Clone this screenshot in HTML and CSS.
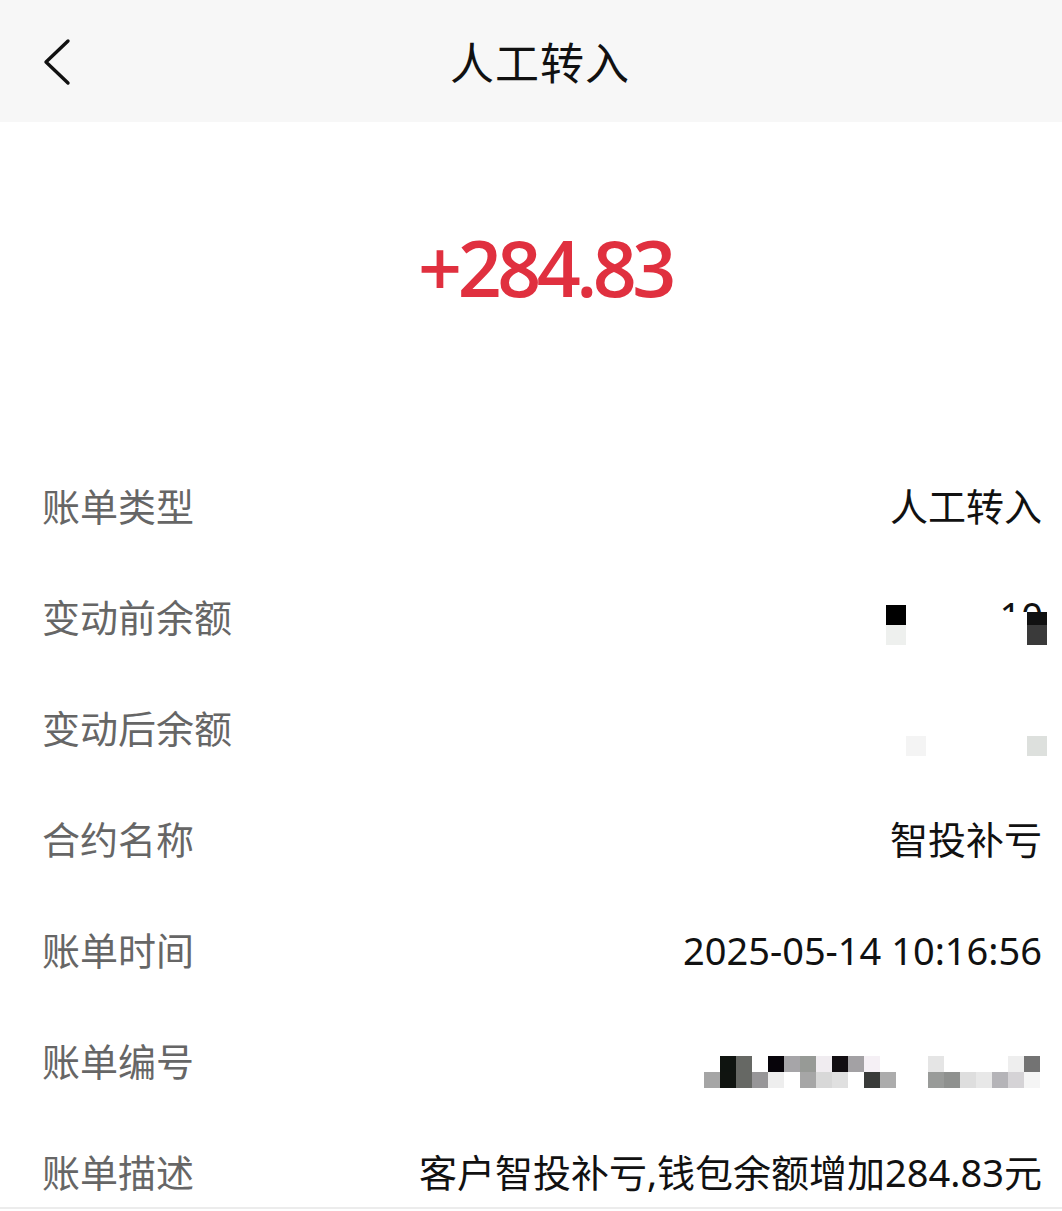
FILE: index.html
```html
<!DOCTYPE html>
<html>

<head>
    <meta charset="utf-8">
    <title>人工转入</title>
    <link rel="stylesheet" href="styles.css">
</head>

<body>
    <div class="page">
        <header class="nav-bar">
            <a class="back" href="#">
                <svg width="32" height="48" viewBox="0 0 32 48">
                    <polyline points="28,3 6,24 28,45" fill="none" stroke="#111" stroke-width="3.4" stroke-linecap="round" stroke-linejoin="round" />
                </svg>
            </a>
            <h1 class="nav-title">人工转入</h1>
        </header>

        <section class="amount-box">
            <div class="amount">+284.83</div>
        </section>

        <ul class="detail-list">
            <li class="detail-row">
                <span class="label">账单类型</span>
                <span class="value">人工转入</span>
            </li>
            <li class="detail-row">
                <span class="label">变动前余额</span>
                <div class="mosaic mosaic-big" id="before">
                    <div class="peek"><span>10</span></div>
                </div>
            </li>
            <li class="detail-row">
                <span class="label">变动后余额</span>
                <div class="mosaic mosaic-big" id="after"></div>
            </li>
            <li class="detail-row">
                <span class="label">合约名称</span>
                <span class="value">智投补亏</span>
            </li>
            <li class="detail-row">
                <span class="label">账单时间</span>
                <span class="value">2025-05-14 10:16:56</span>
            </li>
            <li class="detail-row">
                <span class="label">账单编号</span>
                <div class="mosaic mosaic-small" id="billno"></div>
            </li>
            <li class="detail-row">
                <span class="label">账单描述</span>
                <span class="value">客户智投补亏,钱包余额增加284.83元</span>
            </li>
        </ul>
    </div>

    <script>
        // pixelated (redacted) values, one colour per cell, "" = empty
        const mosaics = {
            before: [
                ["#000", "", "", "", "", "", "", "linear-gradient(transparent 0 35%, #111 35%)"],
                ["#eef0ee", "", "", "", "", "", "", "#3a3a3a"]
            ],
            after: [
                ["", "", "", "", "", "", "", ""],
                ["", "#f4f4f4", "", "", "", "", "", "#dde0dd"]
            ],
            billno: [
                ["", "#0f1410", "#666864", "", "#07040a", "#a6a5a8", "#979a96", "#f0ecf0", "#120e12", "#a3a1a4", "#f5f0f5",
                    "", "", "", "#e5e5e5", "", "", "", "", "#eeeeee", "#737373"],
                ["#a5a5a5", "#101410", "#666864", "#979698", "#eeeeee", "", "#a6a6a6", "#d8d8d8", "#e0e0e0", "", "#393b39",
                    "#acacac", "", "", "#999b99", "#8f918f", "#dedede", "#e8e8e8", "#b5b4b8", "#d5d3d6", "#f5f5f5"]
            ]
        }

        Object.keys(mosaics).forEach(id => {
            const box = document.getElementById(id)
            mosaics[id].forEach(row => {
                row.forEach(color => {
                    const cell = document.createElement('span')
                    cell.className = 'cell'
                    if (color) cell.style.background = color
                    box.appendChild(cell)
                })
            })
        })
    </script>
</body>

</html>
```

FILE: styles.css
```css
body {
    margin: 0;
    padding: 0;
    background-color: #fff;
    font-family: "Noto Sans", "Noto Sans CJK SC", sans-serif;
}

.page {
    width: 1062px;
    height: 1211px;
    overflow: hidden;
}

.nav-bar {
    height: 122px;
    background-color: #f7f7f7;
    display: flex;
    align-items: center;
    justify-content: center;
    position: relative;
}

.back {
    position: absolute;
    left: 40px;
    top: 38px;
    display: flex;
}

.nav-title {
    margin: 0 0 0 18px;
    font-size: 44px;
    font-weight: 400;
    color: #111;
    letter-spacing: 1px;
}

.amount-box {
    height: 328px;
    display: flex;
    justify-content: center;
    padding-top: 100px;
    padding-left: 28px;
    box-sizing: border-box;
}

.amount {
    color: #e0303f;
    font-family: "Open Sans", "Noto Sans", sans-serif;
    font-size: 77px;
    font-weight: 600;
    line-height: 92px;
    letter-spacing: -4.5px;
}

.detail-list {
    list-style: none;
    margin: 0;
    padding: 0;
    height: 757px;
    overflow: hidden;
    border-bottom: 2px solid #ececec;
}

.detail-row {
    height: 111px;
    display: flex;
    align-items: center;
    justify-content: space-between;
    padding: 0 20px 0 42px;
}

.detail-row:last-child {
    height: 93px;
    align-items: flex-start;
    padding-top: 36px;
    box-sizing: border-box;
}

.label {
    font-size: 38px;
    color: #666;
    line-height: 40px;
}

.value {
    font-size: 38px;
    color: #111;
    line-height: 40px;
}

.mosaic {
    display: grid;
    position: relative;
}

.mosaic-big {
    grid-template-columns: repeat(8, 20px);
    grid-auto-rows: 20px;
    column-gap: 0.2px;
    margin-right: -5px;
    margin-top: 16px;
}

.mosaic-small {
    grid-template-columns: repeat(21, 16px);
    grid-auto-rows: 16px;
    margin-right: 2px;
    margin-top: 22px;
}

.peek {
    position: absolute;
    top: -5px;
    right: 4px;
    height: 12px;
    overflow: hidden;
}

.peek span {
    display: block;
    margin-top: -3.5px;
    font-size: 38px;
    line-height: 38px;
    color: #111;
}
```
